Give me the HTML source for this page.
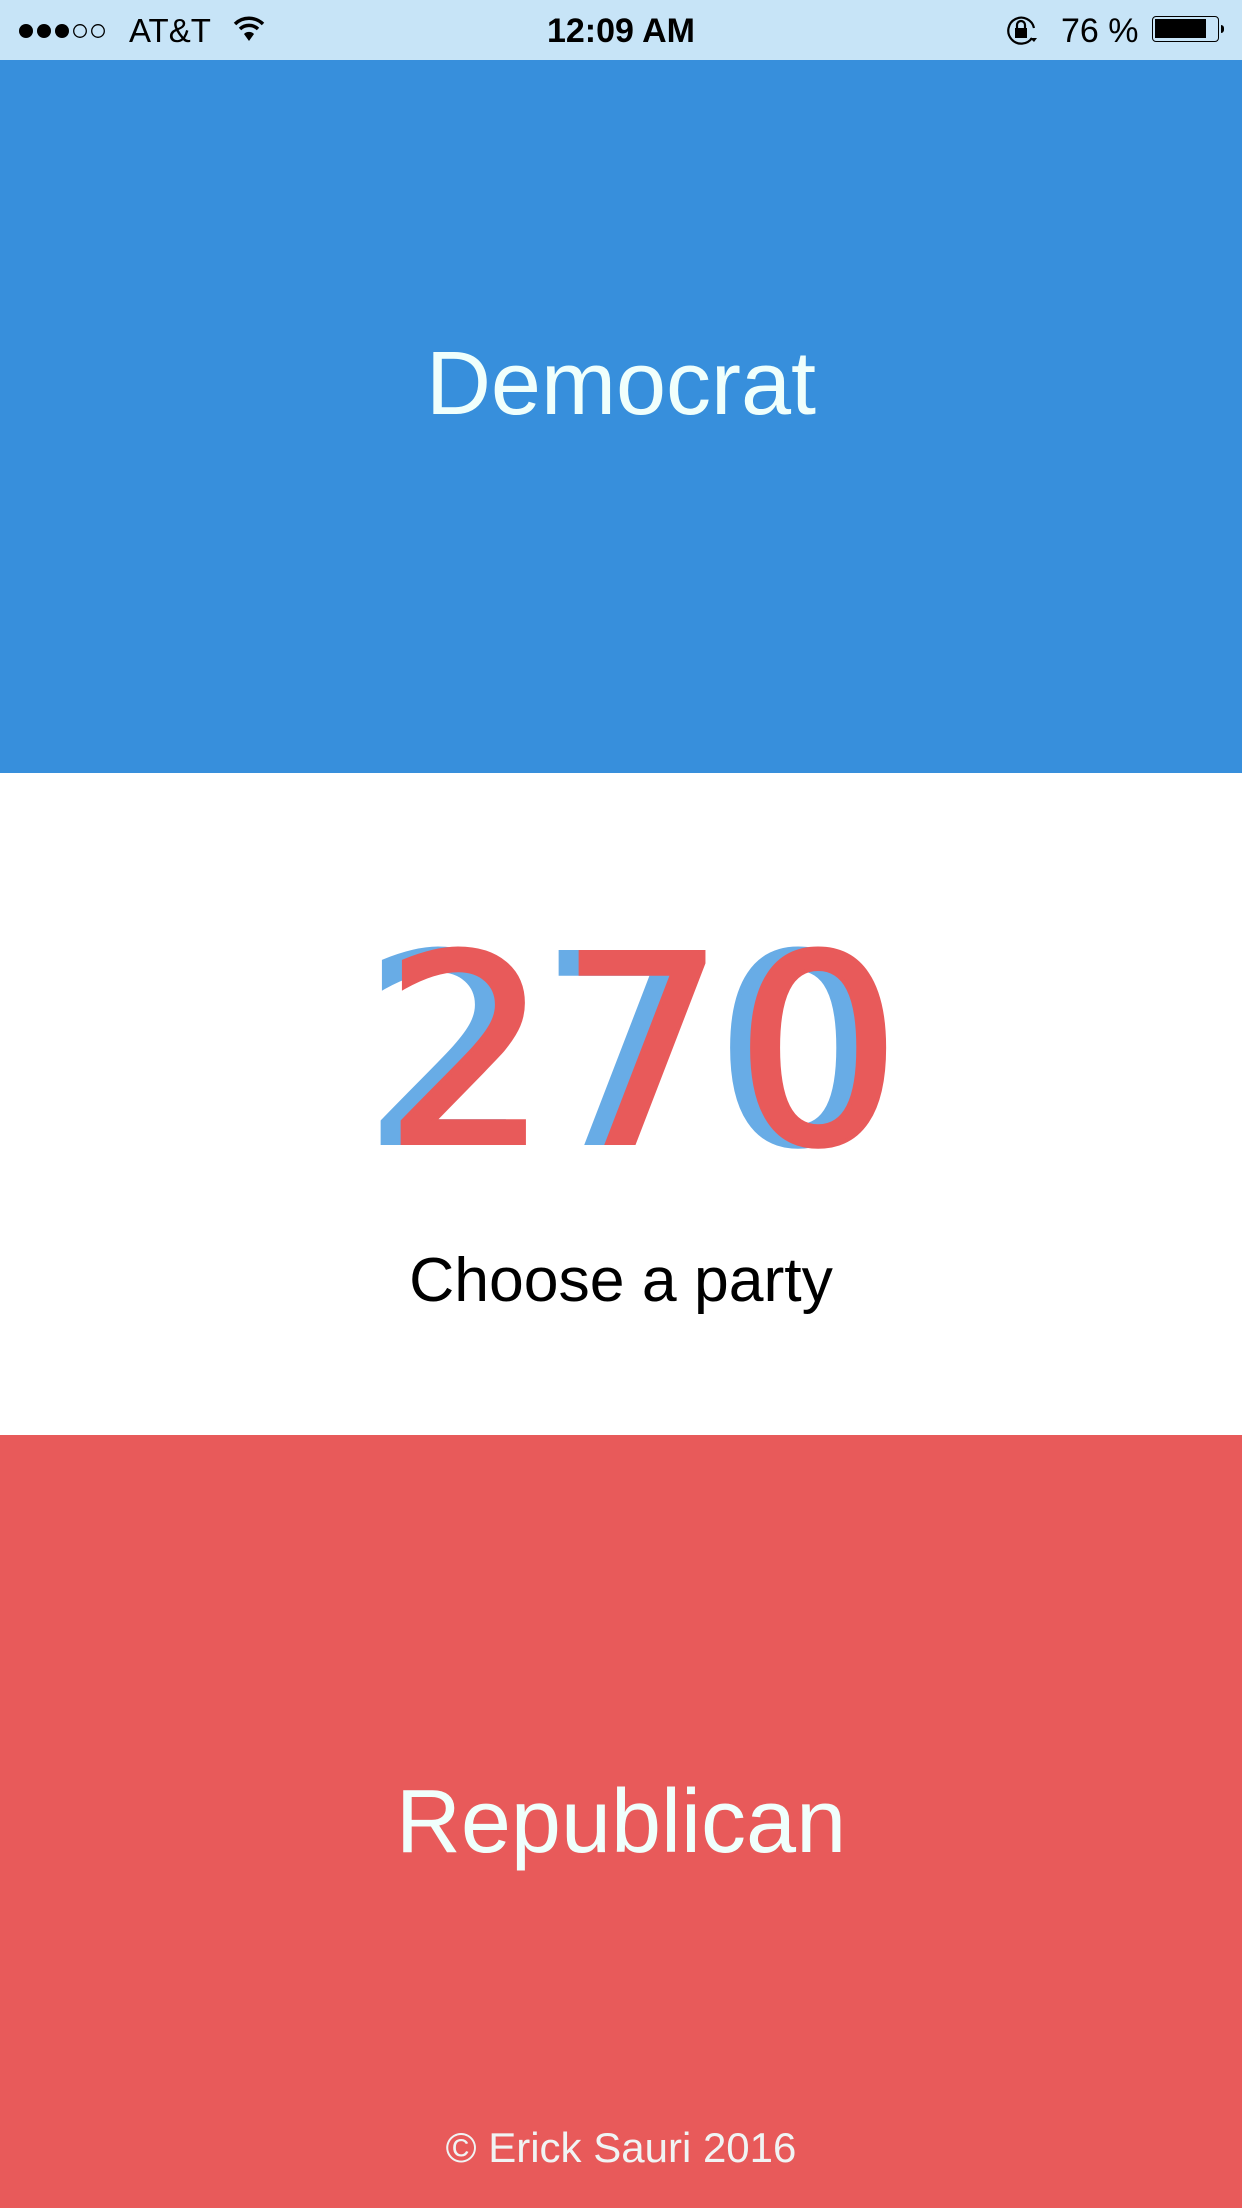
<!DOCTYPE html>
<html><head><meta charset="utf-8">
<style>
html,body{margin:0;padding:0;}
body{width:1242px;height:2208px;position:relative;overflow:hidden;font-family:"Liberation Sans",sans-serif;background:#fff;}
.abs{position:absolute;}
#sb{left:0;top:0;width:1242px;height:60px;background:#c7e4f7;}
#blue{left:0;top:60px;width:1242px;height:713px;background:#378fdc;}
#red{left:0;top:1435px;width:1242px;height:773px;background:#e85a5a;}
.c{left:0;width:1242px;text-align:center;white-space:nowrap;line-height:1;}
.num{font-family:"DejaVu Sans",sans-serif;font-size:262px;letter-spacing:9px;top:922px;box-sizing:border-box;}
</style></head><body>
<div id="sb" class="abs">
  <div class="abs" style="left:18px;top:22px;">
    <svg width="105" height="18" viewBox="0 0 105 18">
      <circle cx="8" cy="9" r="7"/><circle cx="26" cy="9" r="7"/><circle cx="44" cy="9" r="7"/>
      <circle cx="62" cy="9" r="6.3" fill="none" stroke="#000" stroke-width="1.3"/>
      <circle cx="80" cy="9" r="6.3" fill="none" stroke="#000" stroke-width="1.3"/>
    </svg>
  </div>
  <div class="abs" style="left:129px;top:14px;font-size:33px;line-height:1;">AT&amp;T</div>
  <div class="abs" style="left:233px;top:15px;">
    <svg width="32" height="28" viewBox="0 0 32 28">
      <path d="M2 9 A20 20 0 0 1 30 9" fill="none" stroke="#000" stroke-width="3.5"/>
      <path d="M7 14 A13 13 0 0 1 25 14" fill="none" stroke="#000" stroke-width="3.5"/>
      <path d="M11 19 L16 26 L21 19 A7 7 0 0 0 11 19Z"/>
    </svg>
  </div>
  <div class="abs c" style="top:14px;font-size:34px;font-weight:bold;">12:09 AM</div>
  <div class="abs" style="left:1006px;top:14px;">
    <svg width="34" height="32" viewBox="0 0 34 32">
      <path d="M26 24 A13 13 0 1 1 28 14" fill="none" stroke="#000" stroke-width="2.2"/>
      <path d="M24 24 L31 24 L28 28Z"/>
      <rect x="9" y="14" width="12" height="10"/>
      <path d="M11 14 V11 A4 4 0 0 1 19 11 V14" fill="none" stroke="#000" stroke-width="2.2"/>
    </svg>
  </div>
  <div class="abs" style="left:1061px;top:14px;font-size:34px;line-height:1;">76 %</div>
  <div class="abs" style="left:1152px;top:16px;width:67px;height:26px;border:1.5px solid #000;border-radius:4px;box-sizing:border-box;">
    <div style="position:absolute;left:2px;top:2px;width:51px;height:19px;background:#000;"></div>
  </div>
  <div class="abs" style="left:1221px;top:25px;width:3px;height:8px;background:#000;border-radius:0 3px 3px 0;"></div>
</div>
<div id="blue" class="abs"></div>
<div class="abs c" style="top:339px;font-size:90px;color:#f0fffc;">Democrat</div>

<div class="abs c num" style="color:#68ace6;-webkit-text-stroke:4px #68ace6;padding-left:12px;">270</div>
<div class="abs c num" style="color:#e85a5a;-webkit-text-stroke:4px #e85a5a;padding-left:52px;">270</div>
<div class="abs c" style="top:1249px;font-size:62.5px;color:#000;">Choose a party</div>

<div id="red" class="abs"></div>
<div class="abs c" style="top:1777px;font-size:90px;color:#f0fffc;">Republican</div>
<div class="abs c" style="top:2127px;font-size:42px;color:#f0f4f4;">© Erick Sauri 2016</div>
</body></html>
